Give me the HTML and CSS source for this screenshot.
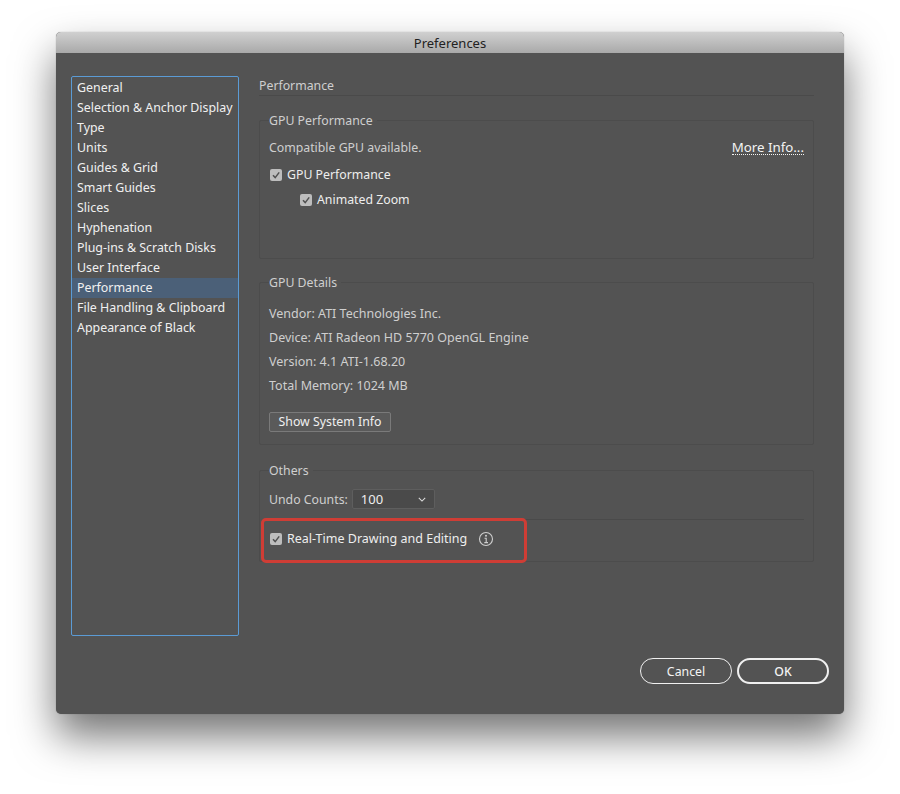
FILE: index.html
```html
<!DOCTYPE html>
<html lang="en">
<head>
    <meta charset="UTF-8">
    <meta name="viewport" content="width=device-width, initial-scale=1.0">
    <title>Preferences</title>
    <link rel="stylesheet" href="styles.css">
</head>
<body>
    <div class="window">
        <div class="titlebar">Preferences</div>
        <div class="content">
            <ul class="sidebar">
                <li>General</li>
                <li>Selection &amp; Anchor Display</li>
                <li>Type</li>
                <li>Units</li>
                <li>Guides &amp; Grid</li>
                <li>Smart Guides</li>
                <li>Slices</li>
                <li>Hyphenation</li>
                <li>Plug-ins &amp; Scratch Disks</li>
                <li>User Interface</li>
                <li class="selected">Performance</li>
                <li>File Handling &amp; Clipboard</li>
                <li>Appearance of Black</li>
            </ul>
            <div class="panel">
                <h2 class="panel-title">Performance</h2>

                <fieldset class="group group-gpu">
                    <legend>GPU Performance</legend>
                    <div class="row-between">
                        <span class="muted">Compatible GPU available.</span>
                        <a class="more-info">More Info...</a>
                    </div>
                    <label class="check check-first"><span class="box"><svg viewBox="0 0 12 12"><path d="M3 6.2 5.2 8.6 9.2 3.4"/></svg></span>GPU Performance</label>
                    <label class="check check-sub"><span class="box"><svg viewBox="0 0 12 12"><path d="M3 6.2 5.2 8.6 9.2 3.4"/></svg></span>Animated Zoom</label>
                </fieldset>

                <fieldset class="group group-details">
                    <legend>GPU Details</legend>
                    <p class="detail">Vendor: ATI Technologies Inc.</p>
                    <p class="detail">Device: ATI Radeon HD 5770 OpenGL Engine</p>
                    <p class="detail">Version: 4.1 ATI-1.68.20</p>
                    <p class="detail">Total Memory: 1024 MB</p>
                    <button class="sys-btn">Show System Info</button>
                </fieldset>

                <fieldset class="group group-others">
                    <legend>Others</legend>
                    <div class="undo-row">
                        <span class="muted">Undo Counts:</span>
                        <div class="select">100<svg viewBox="0 0 10 6"><path d="M1 1 5 5 9 1"/></svg></div>
                    </div>
                    <div class="divider"></div>
                    <label class="check check-rt"><span class="box"><svg viewBox="0 0 12 12"><path d="M3 6.2 5.2 8.6 9.2 3.4"/></svg></span>Real-Time Drawing and Editing
                        <svg class="info" viewBox="0 0 16 16"><circle cx="8" cy="8" r="6.5"/><path d="M6.5 7.2H8.2V11.6M6.3 11.6H10"/><circle class="dot" cx="8" cy="4.8" r="1"/></svg>
                    </label>
                    <div class="highlight"></div>
                </fieldset>
            </div>
        </div>
        <div class="actions">
            <button class="btn">Cancel</button>
            <button class="btn btn-default">OK</button>
        </div>
    </div>
</body>
</html>
```

FILE: styles.css
```css
html, body {
    margin: 0;
    height: 794px;
    overflow: hidden;
}
body {
    background: #fff;
    font-family: "Noto Sans", sans-serif;
    font-size: 12.3px;
    color: #e4e4e4;
    padding: 32px 56px 0;
    box-sizing: border-box;
}
.window {
    position: relative;
    width: 788px;
    height: 682px;
    background: #535353;
    border-radius: 5px;
    box-shadow: 0 22px 42px rgba(0, 0, 0, 0.55), 0 0 1px rgba(0, 0, 0, 0.4);
    display: flex;
    flex-direction: column;
}
.titlebar {
    height: 21px;
    line-height: 23px;
    text-align: center;
    color: #222;
    font-size: 13px;
    background: linear-gradient(#d0d0d0, #a9a9a9);
    border-radius: 5px 5px 0 0;
}
.content {
    display: flex;
    flex: 1;
    padding: 23px 30px 0 15px;
    gap: 20px;
}
.sidebar {
    list-style: none;
    margin: 0;
    padding: 1px 0 0;
    width: 166px;
    height: 557px;
    border: 1px solid #5b9bd5;
    border-radius: 2px;
    font-size: 12.4px;
}
.sidebar li {
    height: 20px;
    line-height: 20px;
    padding-left: 5px;
    color: #f0f0f0;
    white-space: nowrap;
}
.sidebar li.selected {
    background: #4b6078;
}
.panel {
    width: 555px;
}
.panel-title {
    margin: 0;
    font-size: 12.3px;
    font-weight: normal;
    color: #cfcfcf;
    height: 19px;
    line-height: 19px;
    border-bottom: 1px solid #4a4a4a;
}
.group {
    position: relative;
    margin: 0;
    padding: 0 9px;
    border: 1px solid #4c4c4c;
    border-radius: 2px;
    box-sizing: border-box;
    min-width: 0;
}
.group legend {
    padding: 2px 4px 0 0;
    margin-left: 0;
    line-height: 16px;
    color: #cfcfcf;
}
.group-gpu {
    margin-top: 15px;
    height: 148px;
}
.group-details {
    margin-top: 14px;
    height: 172px;
}
.group-others {
    margin-top: 16px;
    height: 101px;
}
.muted {
    color: #cfcfcf;
}
.row-between {
    display: flex;
    justify-content: space-between;
    padding: 10px 0 0;
    line-height: 18px;
}
.more-info {
    color: #f4f4f4;
    font-size: 13.3px;
    border-bottom: 1px dotted #f4f4f4;
    line-height: 14px;
    height: 14px;
    margin-top: 1px;
}
.check {
    display: flex;
    align-items: center;
    line-height: 18px;
    color: #eee;
}
.check-first {
    margin-top: 9px;
    margin-left: 1px;
}
.check-sub {
    margin-top: 7px;
    margin-left: 31px;
}
.check-rt {
    margin-top: 10px;
    margin-left: 1px;
    font-size: 12.5px;
}
.box {
    width: 12px;
    height: 12px;
    background: #bdbdbd;
    border-radius: 2px;
    margin-right: 5px;
    flex: none;
}
.box svg {
    display: block;
    width: 12px;
    height: 12px;
    fill: none;
    stroke: #505050;
    stroke-width: 1.5;
}
.detail {
    margin: 0 0 6px;
    line-height: 18px;
    color: #cfcfcf;
    font-size: 12.5px;
}
.detail:first-of-type {
    margin-top: 14px;
}
.sys-btn {
    display: block;
    margin-top: 17px;
    width: 122px;
    height: 20px;
    padding: 0;
    background: #5a5a5a;
    border: 1px solid #7a7a7a;
    border-radius: 2px;
    color: #f0f0f0;
    font: inherit;
    line-height: 18px;
}
.undo-row {
    display: flex;
    align-items: center;
    gap: 4px;
    margin-top: 10px;
}
.select {
    width: 83px;
    height: 20px;
    box-sizing: border-box;
    padding: 0 8px;
    background: #4a4a4a;
    border: 1px solid #5e5e5e;
    border-radius: 2px;
    display: flex;
    align-items: center;
    justify-content: space-between;
    color: #eee;
    font-size: 13px;
    line-height: 18px;
}
.select svg {
    width: 8px;
    height: 5px;
    fill: none;
    stroke: #ddd;
    stroke-width: 1.3;
}
.divider {
    height: 1px;
    background: #4a4a4a;
    margin-top: 10px;
}
.info {
    width: 16px;
    height: 16px;
    margin-left: 11px;
    fill: none;
    stroke: #cfcfcf;
    stroke-width: 1.1;
}
.info .dot {
    fill: #cfcfcf;
    stroke: none;
}
.highlight {
    position: absolute;
    left: 1px;
    top: 39px;
    width: 266px;
    height: 45px;
    box-sizing: border-box;
    border: 3px solid #cf3d35;
    border-radius: 5px;
}
.actions {
    position: absolute;
    right: 15px;
    bottom: 30px;
    display: flex;
    gap: 5px;
}
.btn {
    width: 92px;
    height: 26px;
    padding: 0;
    background: transparent;
    border: 1px solid #f0f0f0;
    border-radius: 13px;
    color: #f4f4f4;
    font: inherit;
}
.btn-default {
    border-width: 2px;
    font-weight: 500;
}
```
